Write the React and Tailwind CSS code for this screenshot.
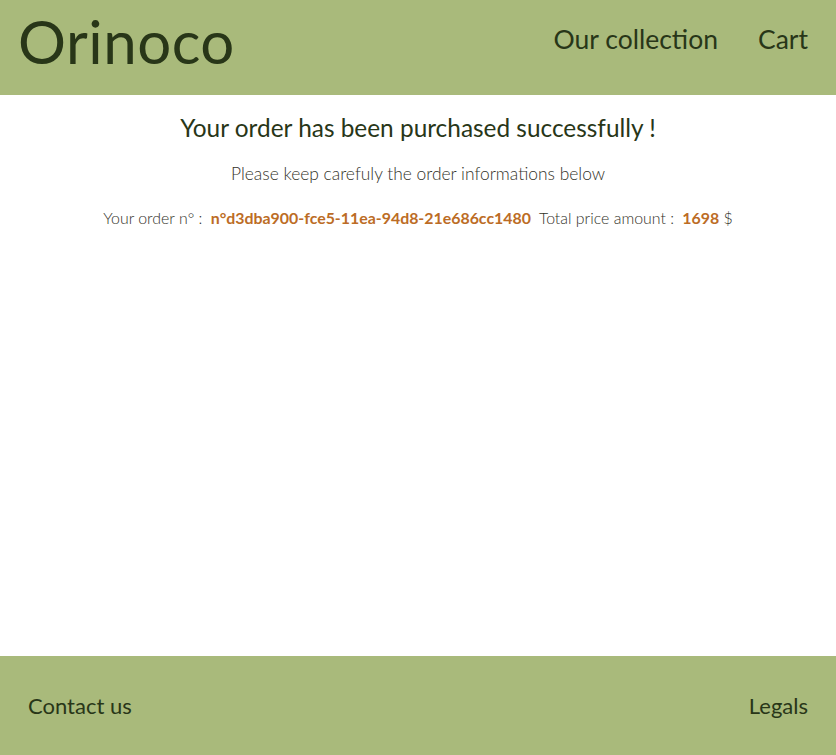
export default function App() {
  return (
    <div className="flex min-h-[755px] flex-col bg-white font-['Lato',sans-serif] text-[#283618]">
      <header className="flex h-[95px] items-center justify-between bg-[#a9ba7b] pl-[18px] pr-[28px]">
        <h1 className="text-[60px] font-normal leading-none tracking-[0.5px] -mt-[14px]">Orinoco</h1>
        <nav className="flex items-center gap-[40px] text-[26.5px] -mt-[16px]">
          <a>Our collection</a>
          <a>Cart</a>
        </nav>
      </header>
      <main className="flex flex-1 flex-col items-center pt-[18px] text-center">
        <h2 className="text-[24.4px] leading-[30px]">Your order has been purchased successfully !</h2>
        <p className="mt-[20px] text-[17.4px] leading-[22px] font-light text-[#33332a]">Please keep carefuly the order informations below</p>
        <p className="mt-[22px] text-[15.9px] leading-[22px] font-light text-[#33332a]">
          Your order n° :{" "}
          <span className="ml-[4px] font-bold text-[#bc6c25]">n°d3dba900-fce5-11ea-94d8-21e686cc1480</span>
          <span className="ml-[8px]">Total price amount : </span>
          <span className="ml-[4px] font-bold text-[#bc6c25]">1698</span> $
        </p>
      </main>
      <footer className="flex h-[99px] items-center justify-between bg-[#a9ba7b] px-[28px] text-[22px]">
        <a>Contact us</a>
        <a>Legals</a>
      </footer>
    </div>
  );
}
